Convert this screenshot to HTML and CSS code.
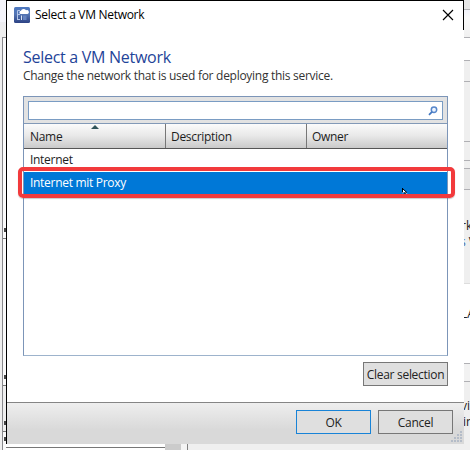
FILE: index.html
```html
<!DOCTYPE html>
<html lang="en">
<head>
<meta charset="utf-8">
<title>Select a VM Network</title>
<link rel="stylesheet" href="styles.css">
</head>
<body>
<div class="backdrop">
  <div class="left-strip">
    <div class="ls-top"></div>
    <div class="ls-panel">
      <i class="tick t1"></i><i class="rule"></i><i class="tick t2"></i><i class="rule"></i><i class="tick t3"></i><i class="rule"></i><i class="tick t4"></i>
    </div>
  </div>
  <div class="bottom-strip"><div class="tree"></div><div class="scroll"></div><div class="divider"></div></div>
  <div class="right-strip">
    <div class="r1"></div><div class="r2"></div><div class="r3"></div><div class="r4"></div><div class="r5"></div><div class="r6"></div><div class="r7"></div><div class="r8"></div>
    <div class="r9"><span class="rk">rk</span><span class="sv">s <b>V</b></span></div>
    <div class="r10"><span>LA</span></div>
    <div class="r11"></div>
    <div class="r12"><span>vir</span><span class="in">in</span></div>
  </div>
</div>
<div class="dialog">
  <header class="titlebar">
    <svg class="app-icon" width="16" height="16" viewBox="0 0 16 16">
      <defs><linearGradient id="ic" x1="0" y1="0" x2="0" y2="1"><stop offset="0" stop-color="#4d78c0"/><stop offset=".45" stop-color="#5576b4"/><stop offset="1" stop-color="#2c4284"/></linearGradient></defs>
      <rect width="16" height="16" rx="1.5" fill="url(#ic)"/>
      <path d="M3.5 13V3.5H6M3.5 7.5H6M3.5 12.5H6" fill="none" stroke="#b4c6e8" stroke-width="1"/>
      <path d="M7 7a1.6 1.6 0 0 1 0-3.2 2.8 2.8 0 0 1 5-.6 2 2 0 0 1 1.6 3.8z" fill="#fff"/>
      <path d="M7.5 8.5v4.5" stroke="#dbe5f6"/><path d="M9 8.5h3.5V13H9z" fill="#6684c0"/>
    </svg>
    <span class="title">Select a VM Network</span>
    <svg class="close" width="12" height="12" viewBox="0 0 12 12"><path d="M1 1l10 10M11 1L1 11" stroke="#000" stroke-width="1.15"/></svg>
  </header>
  <main class="content">
    <h1>Select a VM Network</h1>
    <p>Change the network that is used for deploying this service.</p>
    <div class="list">
      <div class="search"><div class="field">
        <svg width="10" height="10" viewBox="0 0 10 10"><circle cx="6" cy="3.7" r="2.7" fill="#edf5ff" stroke="#5686ca" stroke-width="1.5"/><path d="M4 5.8L1 8.8" stroke="#4377c0" stroke-width="1.7"/></svg>
      </div></div>
      <div class="head"><div class="name">Name</div><div>Description</div><div>Owner</div></div>
      <div class="row">Internet</div>
      <div class="row selected">Internet mit Proxy
        <svg class="cursor" width="6" height="6" viewBox="0 0 6 6"><path d="M0 0L5.5 5.5H4L2 4 0 5.5z" fill="#fff"/><path d="M.5 0v4.5M.5.5L5 4.7M3 4v2" stroke="#000" stroke-width="1" fill="none"/></svg>
      </div>
      <div class="callout"></div>
    </div>
    <div class="actions"><button class="clear">Clear selection</button></div>
  </main>
  <footer class="footer">
    <button class="ok">OK</button><button class="cancel">Cancel</button>
    <svg class="grip" width="12" height="12" viewBox="0 0 12 12" fill="#b4bcc8"><path d="M9 0h2v2H9zM6 3h2v2H6zM9 3h2v2H9zM3 6h2v2H3zM6 6h2v2H6zM9 6h2v2H9zM0 9h2v2H0zM3 9h2v2H3zM6 9h2v2H6zM9 9h2v2H9z"/></svg>
  </footer>
</div>
</body>
</html>
```
FILE: styles.css
```css
* { box-sizing: border-box; }
body { margin: 0; width: 470px; height: 450px; overflow: hidden; font: 12px/16px "Open Sans", "Noto Sans", sans-serif; color: #222; }
.backdrop { display: grid; grid-template: 444px 6px / 6px 458px 6px; height: 450px; background: #efefef; }
.left-strip { grid-area: 1 / 1 / 3 / 2; display: flex; flex-direction: column; }
.ls-top { height: 37px; background: linear-gradient(#f4f4fa 22px, #ececf0 22px, #eee 30px); }
.ls-panel { flex: 1; margin-left: 2px; border-left: 1px solid #88888c; border-top: 1px solid #88888c; background: #fafafa; display: flex; flex-direction: column; }
.rule { height: 1px; background: #777; }
.tick { display: block; background: linear-gradient(#444, #444) right bottom 6px / 2px 4px no-repeat; }
.t1 { height: 200px; }
.t2 { height: 146px; }
.t3 { height: 45px; background-color: #eee; }
.t4 { height: 15px; }
.bottom-strip { grid-area: 2 / 2; display: flex; background: #efefef; }
.tree { width: 159px; background: linear-gradient(#fff 3px, #777 3px, #777 4px, #fff 4px); }
.scroll { width: 16px; background: #cbcbcb; }
.divider { width: 7px; border-right: 1px solid #808080; background: #f4f4f4; }
.right-strip { grid-area: 1 / 3 / 3 / 4; display: flex; flex-direction: column; overflow: hidden; }
.right-strip div { flex: none; border-bottom: 1px solid #b0b0b4; }
.r1 { height: 10px; background: #e6e6e6; }
.r2 { height: 28px; background: linear-gradient(#f2f3fa, #fafafa 8px, #f0f0f0); }
.r3 { height: 23px; background: #fff; }
.r4 { height: 21px; }
.r5 { height: 60px; }
.r6 { height: 19px; }
.r7 { height: 8px; }
.r8 { height: 21px; background: #e7e7e7; }
.right-strip .r9 { height: 94px; padding-top: 28px; border-color: #ddd; }
.right-strip span { display: block; white-space: nowrap; margin-left: -3px; }
.right-strip .sv { color: #3a6ca5; margin-left: -4px; }
.right-strip .in { margin-left: -1px; }
.sv b { color: #222; font-weight: 400; }
.r10 { height: 80px; background: #fff; padding-top: 22px; }
.r11 { height: 18px; background: #f2f2f2; }
.right-strip .r12 { height: 68px; padding-top: 16px; border: 0; }

.dialog { position: absolute; left: 6px; top: 0; width: 458px; height: 444px; display: flex; flex-direction: column; background: linear-gradient(#000, #000) right top / 1px 29px no-repeat #fff; border-top: 1px solid #000; border-left: 1px solid #000; }
.titlebar { height: 28px; display: flex; align-items: center; padding: 0 10px 0 7px; }
.title { flex: 1; margin-left: 5px; color: #000; letter-spacing: -.3px; }
.content { height: 373px; padding: 17px 16px 0 16px; display: flex; flex-direction: column; }
h1 { margin: 0; font-size: 16px; line-height: 22px; font-weight: 400; color: #1f4499; white-space: nowrap; letter-spacing: -.28px; }
p { margin: 0; line-height: 16px; white-space: nowrap; color: #333; letter-spacing: -.28px; }
.list { position: relative; margin-top: 12px; height: 260px; width: 425px; border: 1px solid #7c95b8; border-bottom: 1px solid #9db3cc; color: #1c1c1c; letter-spacing: -.3px; }
.search { height: 27px; padding: 4px; background: #e2e2e2; border-bottom: 1px solid #8299b7; }
.field { height: 19px; background: #fff; border: 1px solid #7a9cc3; display: flex; justify-content: flex-end; align-items: center; padding-right: 4px; }
.head { display: grid; grid-template-columns: 142px 141px 1fr; height: 25px; background: linear-gradient(#fbfbfb, #e8e8e8 50%, #cacaca); border-bottom: 1px solid #555; }
.head div { position: relative; padding: 5px 0 0 5px; border-right: 1px solid #777; }
.head div:first-child { padding-left: 6px; }
.head div:last-child { border: 0; }
.name::after { content: ""; position: absolute; left: 67px; top: 1px; border: 4px solid transparent; border-top: 0; border-bottom-color: #31545a; }
.row { height: 23px; padding: 3px 6px; }
.row.selected { position: relative; background: #0078d7; color: #fff; }
.cursor { position: absolute; left: 378px; top: 16px; }
.callout { position: absolute; left: -6px; top: 70px; width: 437px; height: 31px; border: 4px solid #f23a3c; border-radius: 5px; box-shadow: 0 1px 1px #7776; }
.actions { display: flex; justify-content: flex-end; margin-top: 6px; }
button { height: 24px; padding: 2px 0 0; border: 1px solid #777; background: #dfdfdf; font: inherit; color: #222; white-space: nowrap; letter-spacing: -.3px; }
.clear { width: 85px; }
.footer { position: relative; height: 42px; display: flex; gap: 7px; justify-content: flex-end; padding: 7px 11px 0 0; border-top: 1px solid #858585; background: linear-gradient(#eee, #d9d9d9 65%); }
.ok { width: 75px; border-color: #1883d7; }
.cancel { width: 75px; }
.grip { position: absolute; right: 1px; bottom: 1px; }
```
